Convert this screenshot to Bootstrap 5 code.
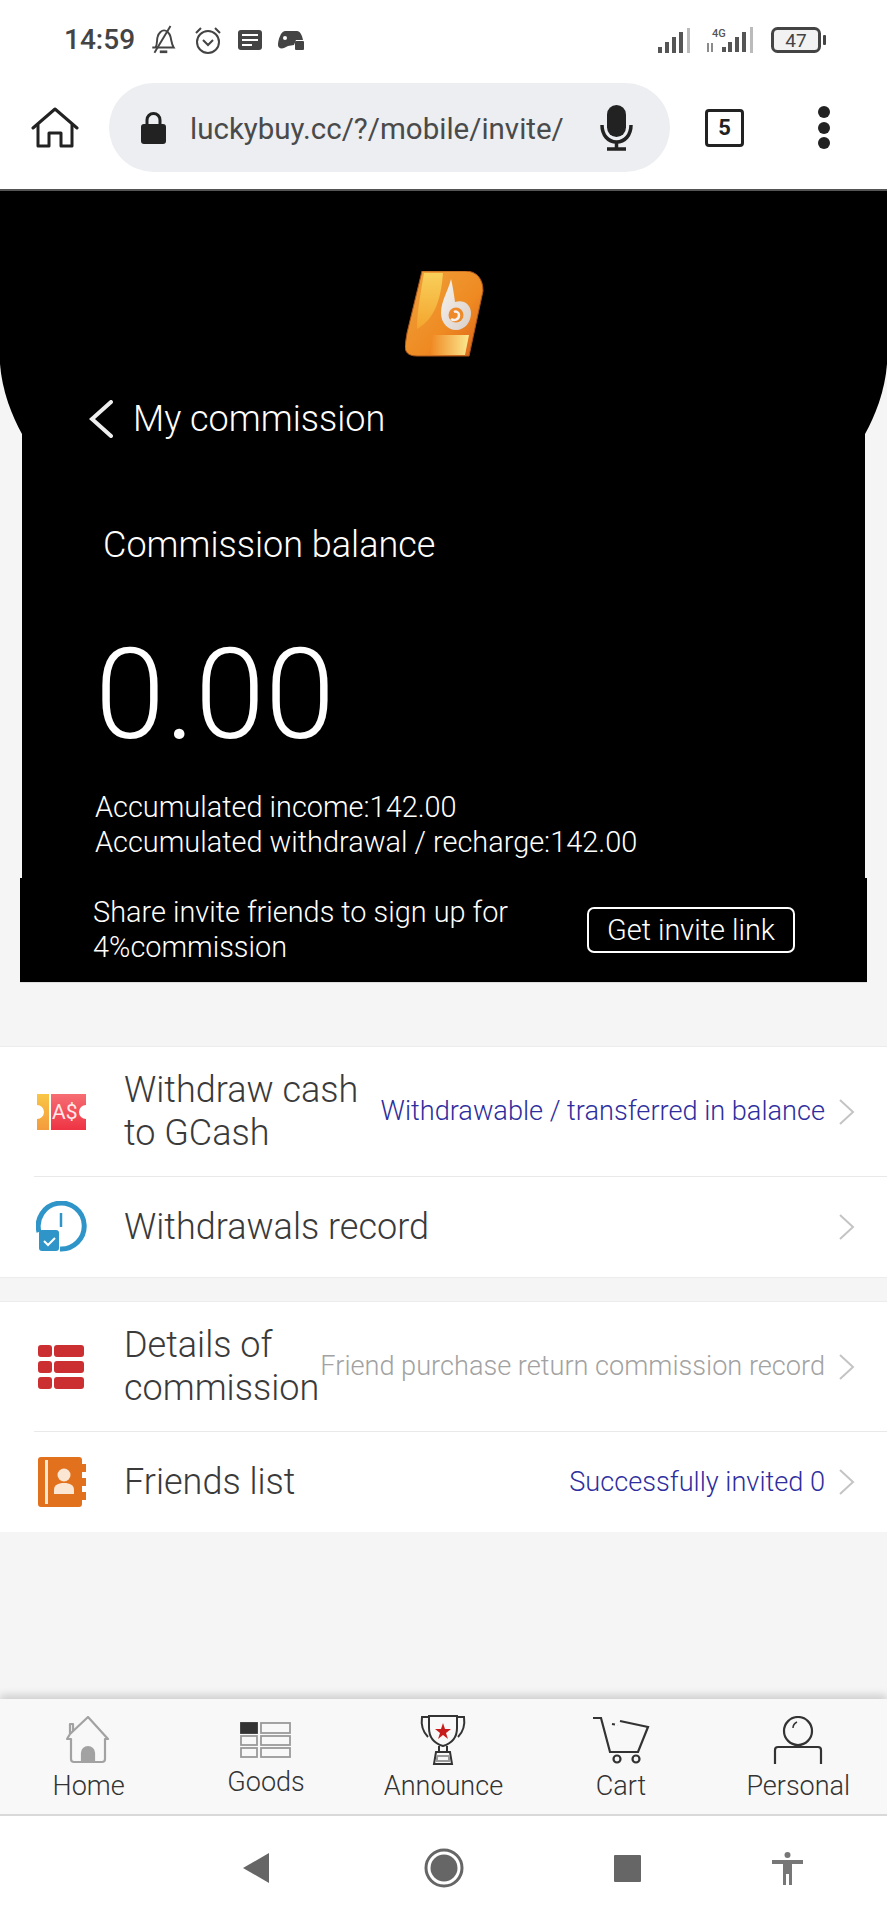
<!DOCTYPE html>
<html lang="en">
<head>
<meta charset="utf-8">
<title>My commission</title>
<link href="https://cdn.jsdelivr.net/npm/bootstrap@5.3.0/dist/css/bootstrap.min.css" rel="stylesheet">
<style>
html,body{height:1920px;overflow:hidden}
body{background:#f5f5f5;font-family:Roboto,"Liberation Sans",sans-serif;font-weight:300;color:#333}
.sysbar{height:80px;background:#fff;padding:0 60px 0 64px;color:#444}
.clock{font-size:28px;font-weight:500;width:85px}
.sysicons{gap:14px}
.bellicon{margin-right:2px}
.toolbar{height:111px;background:#fff;padding:3px 0 17px 0;border-bottom:2px solid #555}
.homebtn{width:109px;justify-content:center}
.urlpill{width:561px;height:89px;background:#eceef1;border-radius:45px;padding-left:32px}
.urltext{font-size:29.500px;font-weight:400;color:#4a4a4a;width:373px;overflow:hidden;white-space:nowrap;margin-left:24px;padding-top:3px}
.micwrap{margin-left:37px}
.tabbox{width:39px;height:38px;border:3px solid #222;border-radius:4px;font-size:22px;font-weight:700;color:#222;line-height:1;margin-left:35px}
.dotstack{gap:3.500px;margin-left:74px}
.dotpip{width:12px;height:12px;background:#222;border-radius:50%}
.arch{height:243px;color:#fff;padding-top:80px;position:relative;z-index:0}
.arch::before{content:"";position:absolute;inset:0;background:#000;z-index:-1;clip-path:path("M0 0H887V173C885 200 875 225 865 243H22C12 225 2 200 0 173Z")}
.logomark{display:block;margin-left:405px}
.backline{margin-top:39px;padding-left:89px;font-size:36px;line-height:44px;color:#fff}
.backline svg{margin-right:20px}
.panel{margin:0 22px;background:#000;color:#fff;height:444px;padding-top:86px}
.balname{font-size:36px;line-height:50px;padding-left:81px}
.balvalue{font-size:126px;line-height:140px;font-weight:300;padding-left:73px;margin-top:55px}
.totals{font-size:28.900px;line-height:35px;padding-left:73px;margin-top:25px}
.inviteband{margin:0 20px;height:105px;background:#000;color:#fff;padding:0 73px;border-bottom:1px solid #ddd}
.invitecopy{font-size:28.900px;line-height:35px;width:473px;flex:none}
.invitebtn{font-size:28.900px;font-weight:300;color:#fff;border:2px solid #fff;border-radius:7px;width:208px;height:46px;padding:0;line-height:1;margin-left:21px;flex:none}
.invitebtn:hover{color:#fff}
.block{background:#fff;border-top:1px solid #ececec;border-bottom:1px solid #ececec}
.block1{margin-top:63px}
.block2{margin-top:23px;border-bottom:0}
.entry{padding-left:36px;padding-right:31px}
.entry1{height:129px}
.entry2{height:100px}
.rule{height:1px;background:#e9e9e9;margin-left:34px}
.iconcell{width:52px;flex:none}
.entryname{font-size:36px;line-height:43px;color:#3a3a3a;margin-left:36px;flex:none}
.hint{font-size:27.150px;flex:1;text-align:right;white-space:nowrap;margin-right:13px}
.hint-blue{color:#2e2e9e}
.hint-grey{color:#a2a2a2}
.grow{flex:1}
.tabbar{background:#f8f8f8;height:117px;box-shadow:0 -4px 8px rgba(0,0,0,.16);border-bottom:2px solid #d9d9d9}
.tabitem{width:20%;padding-top:14px}
.tabicon{height:54px;display:flex;align-items:center;justify-content:center}
.tablabel{font-size:27px;line-height:32px;color:#333;margin-top:3px}
.tablabel-up{margin-top:-1px}
.navkeys{height:104px;background:#fff}
.keyback{margin-left:243px;margin-right:155px}
.keyhome{margin-right:150px}
.keyrecent{margin-right:131px}
</style>
</head>
<body class="d-flex flex-column">

<div class="sysbar d-flex align-items-center">
  <div class="clock">14:59</div>
  <div class="sysicons d-flex align-items-center">
    <svg class="bellicon" width="28" height="30" viewBox="0 0 26 28" fill="none" stroke="#444" stroke-width="1.800"><path d="M6 21c2-3 1-7 2-10 1-4 4-6 6-6s5 2 6 6c1 4 1 7 3 10H3z"/><path d="M10 25h7" stroke-width="2.500"/><path d="M20 1 5 26"/></svg>
    <svg width="30" height="28" viewBox="0 0 30 28" fill="none" stroke="#444" stroke-width="2"><circle cx="15" cy="16" r="11"/><path d="M10 14l5 5 5-5M3 7l5-5M27 7l-5-5"/></svg>
    <svg width="26" height="20" viewBox="0 0 26 20"><rect x="1" y="0" width="24" height="20" rx="3" fill="#444"/><path d="M5 5h16M5 10h16M5 15h10" stroke="#fff" stroke-width="2"/></svg>
    <svg width="28" height="21" viewBox="0 0 28 21"><path d="M8 1h12c3 0 5 4 6 9l-7 0-2 5-6 1-4 2c-3 1-6 0-6-3 0-5 3-14 7-14z" fill="#444"/><circle cx="8" cy="8" r="2" fill="#fff"/><rect x="18" y="11" width="9" height="9" rx="1" fill="#444"/></svg>
  </div>
  <div class="grow"></div>
  <div class="d-flex align-items-center gap-3">
    <svg width="33" height="25" viewBox="0 0 33 25" fill="#555"><rect x="0" y="19" width="4" height="6"/><rect x="7" y="14" width="4" height="11"/><rect x="14" y="9" width="4" height="16"/><rect x="21" y="4" width="4" height="21"/><rect x="29" y="0" width="3" height="25" fill="#bbb"/></svg>
    <svg width="48" height="26" viewBox="0 0 48 26" fill="#555"><text x="5" y="10" font-size="11" font-family="Roboto" font-weight="500">4G</text><path d="M1 16v9M5 25v-9" stroke="#666" stroke-width="1.500"/><rect x="15" y="20" width="4" height="5"/><rect x="21" y="15" width="4" height="10"/><rect x="28" y="10" width="4" height="15"/><rect x="35" y="5" width="4" height="20"/><rect x="43" y="0" width="3" height="26" fill="#bbb"/></svg>
    <svg width="56" height="26" viewBox="0 0 56 26"><rect x="1.500" y="1.500" width="47" height="23" rx="5" fill="#f2f2f2" stroke="#444" stroke-width="3"/><rect x="52" y="8" width="3" height="10" rx="1" fill="#444"/><text x="25" y="20" text-anchor="middle" font-size="19" font-weight="400" font-family="Roboto" fill="#444">47</text></svg>
  </div>
</div>

<div class="toolbar d-flex align-items-center">
  <div class="homebtn d-flex">
    <svg width="48" height="41" viewBox="0 0 48 41" fill="none" stroke="#222" stroke-width="3" stroke-linejoin="round" stroke-linecap="round"><path d="M2 21 24 2l22 19"/><path d="M7 18v21h11V26h12v13h11V18"/></svg>
  </div>
  <div class="urlpill d-flex align-items-center">
    <svg width="25" height="32" viewBox="0 0 25 32"><path d="M6 13V8a6.500 6.500 0 0 1 13 0v5" fill="none" stroke="#222" stroke-width="3"/><rect x="0" y="12" width="25" height="20" rx="3" fill="#222"/></svg>
    <div class="urltext">luckybuy.cc/?/mobile/invite/</div>
    <svg class="micwrap" width="33" height="46" viewBox="0 0 33 46" fill="none"><rect x="7" y="0" width="19" height="32" rx="9.500" fill="#222"/><path d="M2 20c0 10 6 17 14.500 17S31 30 31 20" stroke="#222" stroke-width="3.500"/><path d="M16.500 37v6M7 44h19" stroke="#222" stroke-width="3.500"/></svg>
  </div>
  <div class="tabbox d-flex align-items-center justify-content-center">5</div>
  <div class="dotstack d-flex flex-column"><span class="dotpip"></span><span class="dotpip"></span><span class="dotpip"></span></div>
</div>

<div class="arch">
  <svg class="logomark" width="79" height="87" viewBox="0 0 79 87">
    <defs>
      <linearGradient id="lg1" x1="0" y1="0" x2="1" y2="1"><stop offset="0" stop-color="#eea23c"/><stop offset=".6" stop-color="#ef8a22"/><stop offset="1" stop-color="#d9601a"/></linearGradient>
      <linearGradient id="lg2" x1="0" y1="0" x2="1" y2="0"><stop offset="0" stop-color="#f08a25"/><stop offset="1" stop-color="#fbe98f"/></linearGradient>
      <linearGradient id="lg3" x1="0" y1="0" x2="0" y2="1"><stop offset="0" stop-color="#f8cf5a"/><stop offset="1" stop-color="#f4a52e"/></linearGradient>
      <linearGradient id="lg4" x1="0" y1="0" x2="1" y2="1"><stop offset="0" stop-color="#f7f2ee"/><stop offset="1" stop-color="#d9cfc8"/></linearGradient>
    </defs>
    <path d="M17 0H60C72 0 78 8 78 20L64 85H12C3 85 0 81 0 75L2 62Z" fill="url(#lg1)" stroke="#a9561d" stroke-width="1"/>
    <path d="M19 2H38C36 28 30 48 12 58 12 40 16 20 19 2Z" fill="url(#lg3)"/>
    <path d="M28 64H64L60 84H26C26 78 27 70 28 64Z" fill="url(#lg2)"/>
    <path d="M46 8C44 18 36 30 36 42 36 52 43 59 51 59 60 59 66 51 66 42 66 33 58 28 50 31 49 24 48 16 46 8Z" fill="url(#lg4)"/>
    <circle cx="51" cy="44" r="7.500" fill="#ee8a2a"/>
    <path d="M46 48C49 50 54 49 54 44 54 41 51 40 49 41" fill="none" stroke="#f7f2ee" stroke-width="2.500"/>
  </svg>
  <div class="backline d-flex align-items-center">
    <svg width="24" height="38" viewBox="0 0 24 38" fill="none" stroke="#eee" stroke-width="4" stroke-linecap="round"><path d="M22 2 3 19l19 17"/></svg>
    <span>My commission</span>
  </div>
</div>

<div class="panel">
  <div class="balname">Commission balance</div>
  <div class="balvalue">0.00</div>
  <div class="totals">Accumulated income:142.00<br>Accumulated withdrawal / recharge:142.00</div>
</div>

<div class="inviteband d-flex align-items-center">
  <div class="invitecopy">Share invite friends to sign up for 4%commission</div>
  <button class="btn invitebtn" type="button">Get invite link</button>
</div>

<div class="block block1">
  <div class="entry entry1 d-flex align-items-center">
    <div class="iconcell">
      <svg width="52" height="38" viewBox="0 0 52 38"><defs><linearGradient id="tk1" x1="0" y1="0" x2="0" y2="1"><stop offset="0" stop-color="#f9c645"/><stop offset="1" stop-color="#f39b3c"/></linearGradient><linearGradient id="tk2" x1="0" y1="0" x2="0" y2="1"><stop offset="0" stop-color="#f66e73"/><stop offset="1" stop-color="#ee3344"/></linearGradient></defs><path d="M1 1h12v36H1v-11a7 7 0 0 0 0-14z" fill="url(#tk1)"/><path d="M15 1h35v11a7 7 0 0 0 0 14v11H15z" fill="url(#tk2)"/><text x="16" y="26" font-size="21" font-weight="400" font-family="Roboto" fill="#ffe9e9">A$</text></svg>
    </div>
    <div class="entryname">Withdraw cash<br>to GCash</div>
    <div class="hint hint-blue">Withdrawable / transferred in balance</div>
    <svg width="18" height="28" viewBox="0 0 18 28" fill="none" stroke="#c4c4c4" stroke-width="2"><path d="M2 2l13 12L2 26"/></svg>
  </div>
  <div class="rule"></div>
  <div class="entry entry2 d-flex align-items-center">
    <div class="iconcell">
      <svg width="52" height="52" viewBox="0 0 52 52"><path d="M3 31A23 23 0 1 1 24 48" fill="none" stroke="#2f95c9" stroke-width="5"/><path d="M25 12v14" stroke="#2f95c9" stroke-width="2.500"/><rect x="3" y="29" width="20" height="21" rx="3" fill="#2f95c9"/><path d="M8 40l4 4 7-7" fill="none" stroke="#fff" stroke-width="2"/></svg>
    </div>
    <div class="entryname">Withdrawals record</div>
    <div class="hint"></div>
    <svg width="18" height="28" viewBox="0 0 18 28" fill="none" stroke="#c4c4c4" stroke-width="2"><path d="M2 2l13 12L2 26"/></svg>
  </div>
</div>

<div class="block block2">
  <div class="entry entry1 d-flex align-items-center">
    <div class="iconcell">
      <svg width="52" height="44" viewBox="0 0 52 44" fill="#cc2f31"><rect x="2" y="0" width="14" height="12" rx="3"/><rect x="18" y="0" width="30" height="12" rx="3"/><rect x="2" y="16" width="14" height="12" rx="3"/><rect x="18" y="16" width="30" height="12" rx="3"/><rect x="2" y="32" width="14" height="12" rx="3"/><rect x="18" y="32" width="30" height="12" rx="3"/></svg>
    </div>
    <div class="entryname">Details of<br>commission</div>
    <div class="hint hint-grey">Friend purchase return commission record</div>
    <svg width="18" height="28" viewBox="0 0 18 28" fill="none" stroke="#c4c4c4" stroke-width="2"><path d="M2 2l13 12L2 26"/></svg>
  </div>
  <div class="rule"></div>
  <div class="entry entry2 d-flex align-items-center">
    <div class="iconcell">
      <svg width="52" height="50" viewBox="0 0 52 50"><path d="M5 0h38a3 3 0 0 1 3 3v4h4v8h-4v6h4v8h-4v6h4v8h-4v4a3 3 0 0 1-3 3H5a3 3 0 0 1-3-3V3a3 3 0 0 1 3-3z" fill="#e2711d"/><rect x="9" y="3" width="3" height="44" fill="#fbe6d3"/><circle cx="28" cy="18" r="6.500" fill="#fbe6d3"/><path d="M18 37v-4c0-5 4-7 10-7s10 2 10 7v4z" fill="#fbe6d3"/></svg>
    </div>
    <div class="entryname">Friends list</div>
    <div class="hint hint-blue">Successfully invited 0</div>
    <svg width="18" height="28" viewBox="0 0 18 28" fill="none" stroke="#c4c4c4" stroke-width="2"><path d="M2 2l13 12L2 26"/></svg>
  </div>
</div>

<div class="grow"></div>

<div class="tabbar d-flex">
  <div class="tabitem d-flex flex-column align-items-center">
    <div class="tabicon"><svg width="50" height="48" viewBox="0 0 50 48" fill="none" stroke="#a2a2a2" stroke-width="2.200" stroke-linejoin="round"><path d="M6 18 24 1l20 22-3 0v20a3 3 0 0 1-3 3H10a3 3 0 0 1-3-3V23H3l3-5V8h3v7"/><path d="M18 46V37a6 6 0 0 1 12 0v9z" fill="#a2a2a2"/></svg></div>
    <div class="tablabel">Home</div>
  </div>
  <div class="tabitem d-flex flex-column align-items-center">
    <div class="tabicon"><svg width="52" height="36" viewBox="0 0 52 36" fill="none" stroke="#999" stroke-width="1.800"><rect x="1" y="1" width="16" height="10" fill="#333" stroke="#333"/><rect x="1" y="14" width="16" height="9"/><rect x="1" y="26" width="16" height="9"/><rect x="21" y="1" width="29" height="10"/><rect x="21" y="14" width="29" height="9"/><rect x="21" y="26" width="29" height="9"/></svg></div>
    <div class="tablabel tablabel-up">Goods</div>
  </div>
  <div class="tabitem d-flex flex-column align-items-center">
    <div class="tabicon"><svg width="52" height="52" viewBox="0 0 52 52" fill="none" stroke="#333" stroke-width="2"><path d="M12 2h28v12c0 9-4 15-14 18-10-3-14-9-14-18z"/><path d="M12 3H5c-1 7 0 14 6 20M40 3h7c1 7 0 14-6 20"/><path d="M22 32v6h8v-6M19 38h14l2 12H17z"/><rect x="20" y="42" width="12" height="5" stroke="#999"/><path d="m26 9 2 6h6l-5 4 2 6-5-4-5 4 2-6-5-4h6z" fill="#c71a1a" stroke="none"/></svg></div>
    <div class="tablabel">Announce</div>
  </div>
  <div class="tabitem d-flex flex-column align-items-center">
    <div class="tabicon"><svg width="58" height="48" viewBox="0 0 58 48" fill="none" stroke="#333" stroke-width="2.200"><path d="M1 2h8l9 34h28l10-25-28-6"/><path d="M20 8l6 1" stroke-dasharray="3 3"/><circle cx="25" cy="43" r="3.500"/><circle cx="44" cy="43" r="3.500"/></svg></div>
    <div class="tablabel">Cart</div>
  </div>
  <div class="tabitem d-flex flex-column align-items-center">
    <div class="tabicon"><svg width="50" height="48" viewBox="0 0 50 48" fill="none" stroke="#333" stroke-width="2.200"><ellipse cx="25" cy="15" rx="14" ry="14"/><path d="M20 12c0-3 2-5 4-6" stroke-width="1.500"/><path d="M2 48V34a3 3 0 0 1 3-3h40a3 3 0 0 1 3 3v14"/></svg></div>
    <div class="tablabel">Personal</div>
  </div>
</div>

<div class="navkeys d-flex align-items-center">
  <svg class="keyback" width="26" height="30" viewBox="0 0 26 30"><path d="M26 0v30L0 15z" fill="#666"/></svg>
  <svg class="keyhome" width="40" height="40" viewBox="0 0 40 40"><circle cx="20" cy="20" r="18" fill="none" stroke="#666" stroke-width="3"/><circle cx="20" cy="20" r="13.500" fill="#666"/></svg>
  <svg class="keyrecent" width="27" height="27" viewBox="0 0 27 27"><rect width="27" height="27" rx="1" fill="#666"/></svg>
  <svg width="31" height="33" viewBox="0 0 31 33" fill="#777"><circle cx="15.500" cy="3" r="3"/><path d="M0 8h31v4H20v21h-3V22h-3v11h-3V12H0z"/></svg>
</div>

<script src="https://cdn.jsdelivr.net/npm/bootstrap@5.3.0/dist/js/bootstrap.bundle.min.js"></script>
</body>
</html>
